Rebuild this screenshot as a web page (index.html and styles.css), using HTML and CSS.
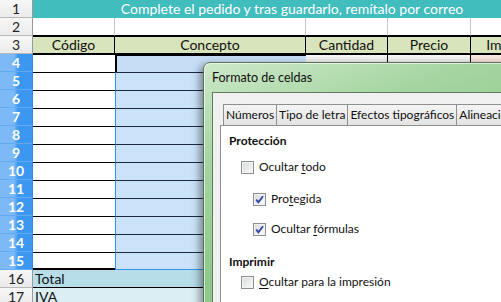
FILE: index.html
```html
<!DOCTYPE html>
<html>
<head>
    <title>Pedido - Formato de celdas</title>
    <link rel="stylesheet" href="styles.css">
</head>
<body>
    <div class="sheet">
        <div class="rh">1</div>
        <div class="cell title">Complete el pedido y tras guardarlo, remítalo por correo</div>

        <div class="rh">2</div>
        <div class="cell blank"></div><div class="cell blank"></div><div class="cell blank"></div><div class="cell blank"></div><div class="cell blank"></div>

        <div class="rh">3</div>
        <div class="cell head">Código</div><div class="cell head">Concepto</div><div class="cell head">Cantidad</div><div class="cell head">Precio</div><div class="cell head">Importe</div>

        <div class="rh sel">4</div>
        <div class="cell code"></div><div class="cell concept cursor"></div><div class="cell qty"></div><div class="cell qty"></div><div class="cell amount"></div>
        <div class="rh sel">5</div>
        <div class="cell code"></div><div class="cell concept"></div><div class="cell qty"></div><div class="cell qty"></div><div class="cell amount"></div>
        <div class="rh sel">6</div>
        <div class="cell code"></div><div class="cell concept"></div><div class="cell qty"></div><div class="cell qty"></div><div class="cell amount"></div>
        <div class="rh sel">7</div>
        <div class="cell code"></div><div class="cell concept"></div><div class="cell qty"></div><div class="cell qty"></div><div class="cell amount"></div>
        <div class="rh sel">8</div>
        <div class="cell code"></div><div class="cell concept"></div><div class="cell qty"></div><div class="cell qty"></div><div class="cell amount"></div>
        <div class="rh sel">9</div>
        <div class="cell code"></div><div class="cell concept"></div><div class="cell qty"></div><div class="cell qty"></div><div class="cell amount"></div>
        <div class="rh sel">10</div>
        <div class="cell code"></div><div class="cell concept"></div><div class="cell qty"></div><div class="cell qty"></div><div class="cell amount"></div>
        <div class="rh sel">11</div>
        <div class="cell code"></div><div class="cell concept"></div><div class="cell qty"></div><div class="cell qty"></div><div class="cell amount"></div>
        <div class="rh sel">12</div>
        <div class="cell code"></div><div class="cell concept"></div><div class="cell qty"></div><div class="cell qty"></div><div class="cell amount"></div>
        <div class="rh sel">13</div>
        <div class="cell code"></div><div class="cell concept"></div><div class="cell qty"></div><div class="cell qty"></div><div class="cell amount"></div>
        <div class="rh sel">14</div>
        <div class="cell code"></div><div class="cell concept"></div><div class="cell qty"></div><div class="cell qty"></div><div class="cell amount"></div>
        <div class="rh sel">15</div>
        <div class="cell code last"></div><div class="cell concept last"></div><div class="cell qty"></div><div class="cell qty"></div><div class="cell amount"></div>

        <div class="rh">16</div>
        <div class="cell total">Total</div>
        <div class="rh">17</div>
        <div class="cell iva">IVA</div>
    </div>

    <!-- dialog over the sheet -->
    <div class="dialog">
        <div class="dialog-title">Formato de celdas</div>
        <div class="dialog-body">
            <div class="tabs">
                <div class="tab">Números</div>
                <div class="tab">Tipo de letra</div>
                <div class="tab">Efectos tipográficos</div>
                <div class="tab">Alineación</div>
            </div>
            <div class="panel">
                <div class="group-title">Protección</div>
                <div class="check lvl1 first">
                    <span class="box"></span>
                    <span>Ocultar <u>t</u>odo</span>
                </div>
                <div class="check lvl2 second">
                    <span class="box"><svg width="11" height="11" viewBox="0 0 11 11"><path d="M2.2 5.6 L4.4 8.2 L9 2.2" fill="none" stroke="#2b44a3" stroke-width="1.8"/></svg></span>
                    <span>Pro<u>t</u>egida</span>
                </div>
                <div class="check lvl2 third">
                    <span class="box"><svg width="11" height="11" viewBox="0 0 11 11"><path d="M2.2 5.6 L4.4 8.2 L9 2.2" fill="none" stroke="#2b44a3" stroke-width="1.8"/></svg></span>
                    <span>Ocultar <u>f</u>órmulas</span>
                </div>
                <div class="group-title print">Imprimir</div>
                <div class="check lvl1 fourth">
                    <span class="box"></span>
                    <span><u>O</u>cultar para la impresión</span>
                </div>
            </div>
        </div>
    </div>
</body>
</html>
```

FILE: styles.css
```css
* {
    margin: 0;
    padding: 0;
    box-sizing: border-box;
}

body {
    font-family: Lato, "Liberation Sans", sans-serif;
    background-color: #fff;
    width: 501px;
    height: 302px;
    overflow: hidden;
    position: relative;
}

.sheet {
    display: grid;
    grid-template-columns: 33px 82px 191px 82px 83px 80px;
    grid-auto-rows: 18px;
    font-size: 14px;
    color: #111;
}

/* row headers */
.rh {
    background: linear-gradient(#f7f7f7, #ebebeb);
    border-right: 1px solid #9a9a9a;
    border-bottom: 1px solid #b8b8b8;
    text-align: center;
    line-height: 17px;
    color: #222;
}

.rh.sel {
    background: linear-gradient(to right, #7cb9f6 0, #7cb9f6 14px, #3c97f0 18px);
    color: #fff;
    font-weight: bold;
    border-bottom-color: #62aaf3;
    border-right-color: #2e88e2;
}

.title {
    grid-column: 2 / -1;
    background-color: #41bdbe;
    color: #fff;
    text-align: center;
    line-height: 18px;
}

.blank {
    border-right: 1px solid #c6c6c6;
    border-bottom: 1px solid #000;
}

.head {
    background-color: #d8e4bc;
    border-top: 1px solid #000;
    border-bottom: 1px solid #000;
    border-right: 1px solid #000;
    text-align: center;
    line-height: 15px;
}

.code {
    background-color: #fff;
    border-top: 1px solid #000;
}

.code.last {
    border-bottom: 2px solid #000;
}

.concept {
    background-color: #cbe3f9;
    border-left: 1px solid #3394f4;
    border-top: 1px solid #1b2a3c;
}

.concept.cursor {
    background-color: #c6ddf6;
    border-left: 2px solid #000;
    border-top: 2px solid #000;
}

.concept.last {
    border-bottom: 1px solid #3394f4;
}

.qty {
    background: linear-gradient(#f7f7f7, #d9d9d9);
    border-right: 1px solid #000;
    border-top: 1px solid #000;
}

.amount {
    background: linear-gradient(#f8ebe4, #e8cbbd);
    border-top: 1px solid #000;
}

.total,
.iva {
    grid-column: 2 / -1;
    padding-left: 2px;
    line-height: 17px;
    border-bottom: 1px solid #000;
}

.total {
    background-color: #b7dde8;
}

.iva {
    background-color: #daeef3;
}

/* Formato de celdas dialog */
.dialog {
    position: absolute;
    left: 203px;
    top: 62px;
    width: 340px;
    height: 270px;
    border: 1px solid #5a745c;
    border-radius: 7px 0 0 0;
    background: linear-gradient(160deg, #cde8c9 0%, #a6d5a2 25%, #8ec98b 55%, #8ac587 100%);
    box-shadow: -3px 3px 9px rgba(0, 0, 0, 0.45), inset 1px 1px 0 rgba(255, 255, 255, 0.6);
    padding-left: 8px;
    font-family: Lato, "Liberation Sans", sans-serif;
    font-size: 12px;
    color: #111;
}

.dialog-title {
    height: 29px;
    line-height: 30px;
    font-size: 12.5px;
}

.dialog-body {
    background-color: #f0f0f0;
    border: 1px solid #5f7c60;
    height: 240px;
    padding: 11px 0 0 7px;
}

.tabs {
    display: flex;
    margin-left: 3px;
}

.tab {
    height: 21px;
    border: 1px solid #8e8f8f;
    border-bottom: none;
    margin-right: -1px;
    padding: 0 2px;
    line-height: 20px;
    white-space: nowrap;
    background: linear-gradient(#f4f4f4, #e3e3e3);
}

.panel {
    background-color: #fff;
    border: 1px solid #8e8f8f;
    height: 220px;
    padding: 7px 0 0 8px;
}

.group-title {
    font-weight: bold;
    line-height: 16px;
}

.group-title.print {
    margin-top: 17px;
}

.check {
    display: flex;
    align-items: center;
    gap: 5px;
    line-height: 16px;
}

.check u {
    text-underline-offset: 2px;
}

.lvl1 {
    margin-left: 12px;
}

.lvl2 {
    margin-left: 24px;
}

.first {
    margin-top: 10px;
}

.second {
    margin-top: 16px;
}

.third {
    margin-top: 14px;
}

.fourth {
    margin-top: 4px;
}

.box {
    width: 13px;
    height: 13px;
    border: 1px solid #8e8f8f;
    background: linear-gradient(135deg, #d6d8db, #fbfbfb);
    box-shadow: inset 0 0 0 1px #f2f2f2;
    display: flex;
    align-items: center;
    justify-content: center;
}
```
